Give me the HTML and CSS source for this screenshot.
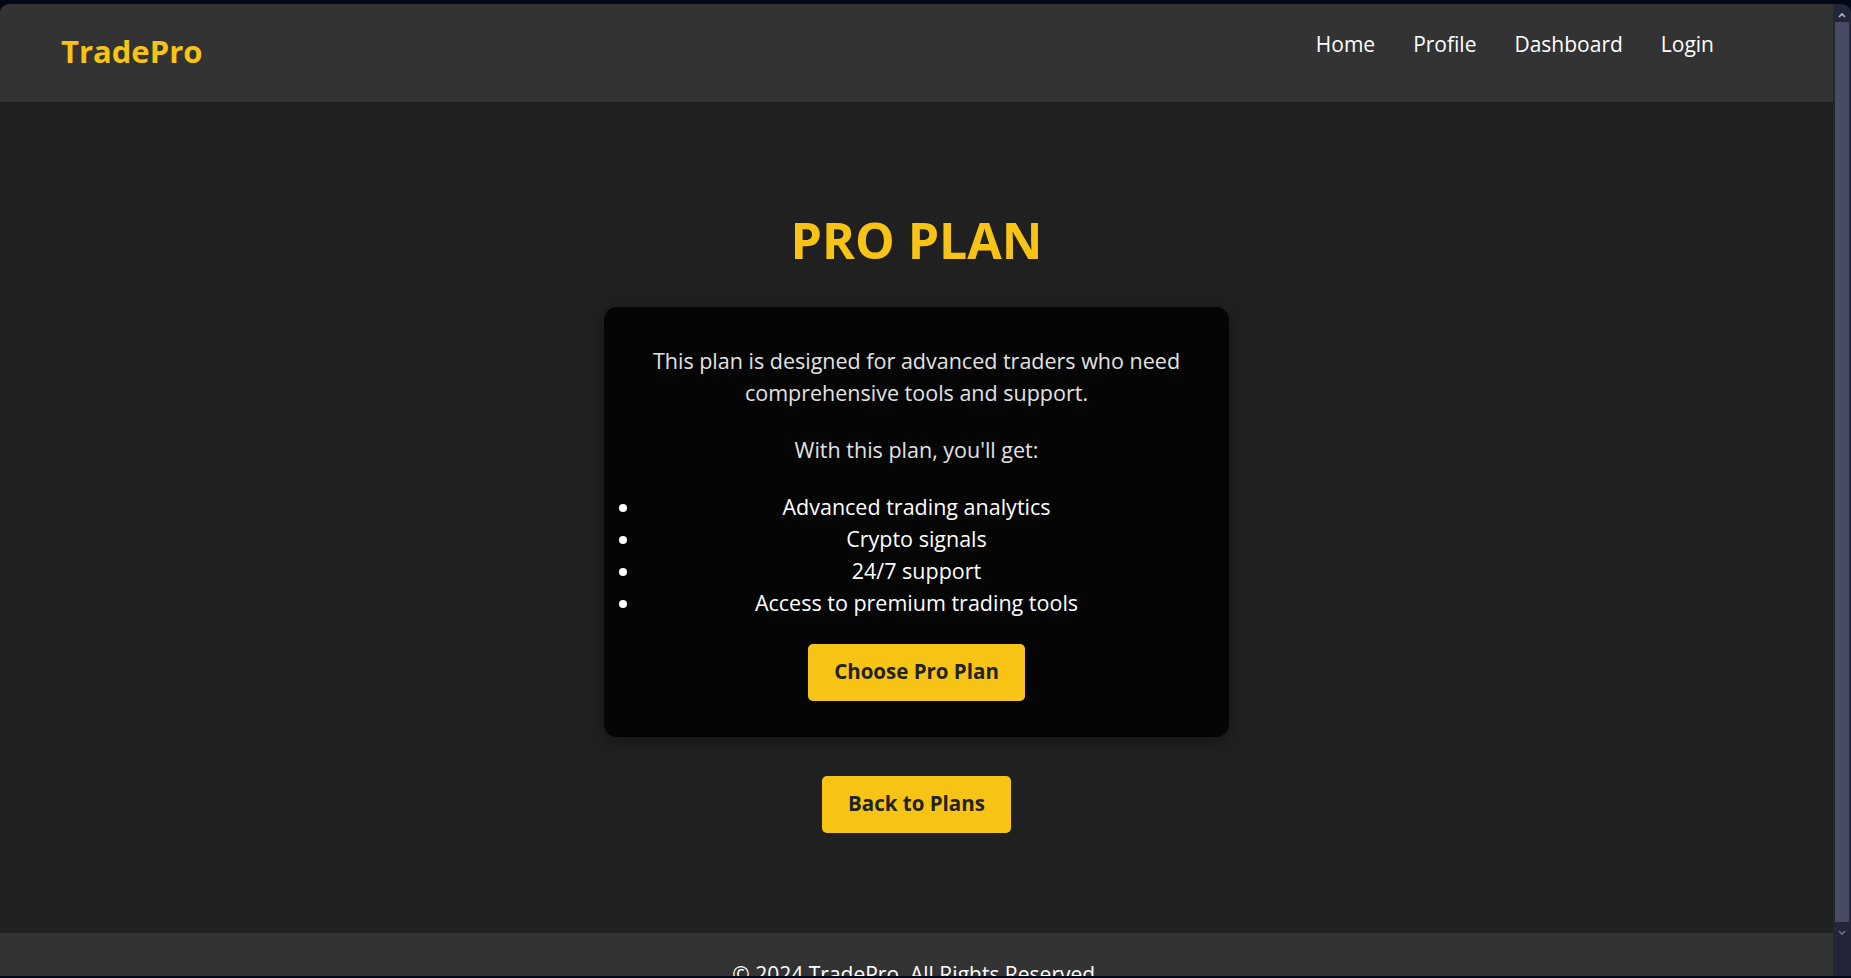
FILE: index.html
```html
<!DOCTYPE html>
<html lang="en">
<head>
<meta charset="utf-8">
<title>Pro Plan - TradePro</title>
<link rel="stylesheet" href="styles.css">
</head>
<body>
<div class="window">
  <div class="viewport">
    <header class="site-header">
      <div class="logo">TradePro</div>
      <nav>
        <ul class="nav-list">
          <li><a href="#">Home</a></li>
          <li><a href="#">Profile</a></li>
          <li><a href="#">Dashboard</a></li>
          <li><a href="#">Login</a></li>
        </ul>
      </nav>
    </header>
    <main class="main">
      <h1 class="title">PRO PLAN</h1>
      <section class="card">
        <p class="desc">This plan is designed for advanced traders who need comprehensive tools and support.</p>
        <p class="desc">With this plan, you'll get:</p>
        <ul class="features">
          <li>Advanced trading analytics</li>
          <li>Crypto signals</li>
          <li>24/7 support</li>
          <li>Access to premium trading tools</li>
        </ul>
        <a href="#" class="btn">Choose Pro Plan</a>
      </section>
      <a href="#" class="btn btn-back">Back to Plans</a>
    </main>
    <footer class="site-footer">
      <p>&copy; 2024 TradePro. All Rights Reserved.</p>
    </footer>
  </div>
  <div class="scrollbar">
    <svg class="arrow" width="18" height="14" viewBox="0 0 18 14"><polyline points="6,9 9,6 12,9" fill="none" stroke="#b8bbcc" stroke-width="1.6"/></svg>
    <div class="thumb"></div>
    <svg class="arrow" width="18" height="14" viewBox="0 0 18 14"><polyline points="6,5 9,8 12,5" fill="none" stroke="#6c6f84" stroke-width="1.6"/></svg>
  </div>
</div>
</body>
</html>
```

FILE: styles.css
```css
* {
  box-sizing: border-box;
}

html, body {
  margin: 0;
  padding: 0;
  background: #030816;
  height: 100%;
  overflow: hidden;
}

body {
  font-family: "Open Sans", "Liberation Sans", sans-serif;
  color: #ffffff;
  padding-top: 4px;
}

.window {
  display: flex;
  height: 972px;
  border-radius: 9px 9px 0 0;
  overflow: hidden;
}

.viewport {
  flex: 1;
  overflow: hidden;
  background: #202020;
}

.site-header {
  display: flex;
  justify-content: space-between;
  align-items: flex-start;
  height: 98px;
  padding: 0 119px 0 61px;
  background: #333333;
}

.logo {
  margin-top: 27px;
  font-size: 31px;
  line-height: 40px;
  font-weight: 700;
  color: #f7c415;
}

.nav-list {
  display: flex;
  gap: 38px;
  list-style: none;
  margin: 25px 0 0;
  padding: 0;
}

.nav-list a {
  color: #ffffff;
  text-decoration: none;
  font-size: 21px;
  line-height: 30px;
}

.main {
  display: flex;
  flex-direction: column;
  align-items: center;
  padding: 108px 0 100px;
}

.title {
  margin: 0 0 37px;
  font-size: 50px;
  line-height: 60px;
  font-weight: 700;
  color: #f7c415;
}

.card {
  display: flex;
  flex-direction: column;
  width: 625px;
  padding: 38px 30px 36px;
  background: #050505;
  border-radius: 13px;
  box-shadow: 0 4px 14px rgba(0, 0, 0, 0.35);
  text-align: center;
  font-size: 21.5px;
  line-height: 32px;
}

.desc {
  margin: 0 0 25px;
  color: #e2e2e2;
}

.features {
  margin: 0 0 25px;
  padding: 0 7px;
  color: #ffffff;
}

.btn {
  align-self: center;
  display: inline-block;
  padding: 15px 26px 17px;
  background: #f7c415;
  color: #222222;
  border-radius: 5px;
  font-size: 20.5px;
  line-height: 25px;
  font-weight: 700;
  text-decoration: none;
}

.btn-back {
  margin-top: 39px;
}

.site-footer {
  background: #333333;
  padding: 25px 0;
  text-align: center;
}

.site-footer p {
  margin: 0;
  font-size: 21px;
  line-height: 32px;
}

.scrollbar {
  width: 18px;
  display: flex;
  flex-direction: column;
  align-items: center;
  background: #23263a;
}

.arrow {
  flex: none;
  margin-top: 4px;
}

.thumb {
  width: 14px;
  height: 900px;
  background: #484b64;
}
```
